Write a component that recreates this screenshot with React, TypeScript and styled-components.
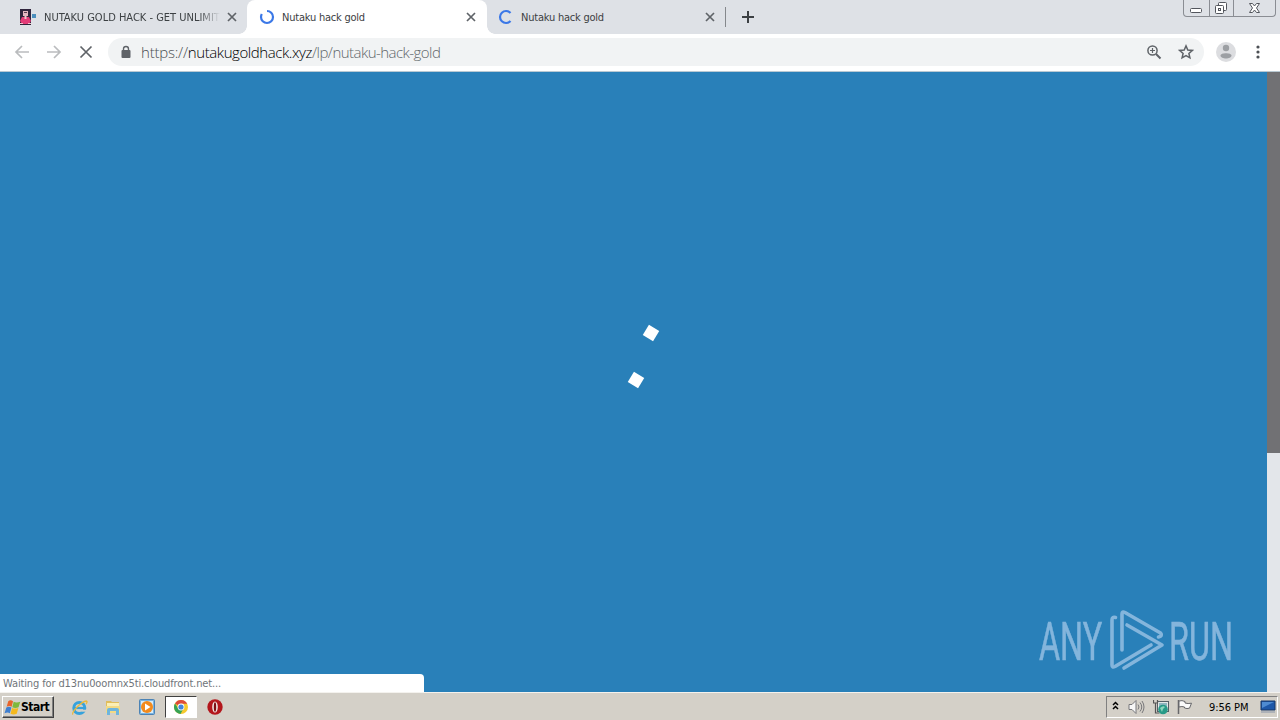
import React from 'react';
import styled, { createGlobalStyle, css } from 'styled-components';

const GlobalStyle = createGlobalStyle`
  * {
    box-sizing: border-box;
  }
  body {
    margin: 0;
    overflow: hidden;
    font-family: 'DejaVu Sans Condensed', 'DejaVu Sans', sans-serif;
    font-stretch: condensed;
  }
  svg {
    display: block;
    flex: none;
  }
`;

const Screen = styled.div`
  position: relative;
  display: flex;
  flex-direction: column;
  width: 1280px;
  height: 720px;
  background: #2980b9;
`;

const TabStrip = styled.div`
  display: flex;
  height: 34px;
  background: #dee1e6;
`;

const Tab = styled.div<{ width: number; active?: boolean }>`
  position: relative;
  display: flex;
  align-items: center;
  width: ${(props) => props.width}px;
  height: 34px;
  padding: 0 11px 0 12px;
  ${(props) => props.active && css`
    background: #fff;
    border-radius: 8px 8px 0 0;
    &:before,
    &:after {
      content: '';
      position: absolute;
      bottom: 0;
      width: 8px;
      height: 8px;
    }
    &:before {
      left: -8px;
      background: radial-gradient(circle at 0 0, transparent 7.5px, #fff 8px);
    }
    &:after {
      right: -8px;
      background: radial-gradient(circle at 100% 0, transparent 7.5px, #fff 8px);
    }
  `}
`;

const FirstTab = styled(Tab)`
  padding: 0 10px 0 19px;
`;

const LastTab = styled(Tab)`
  padding: 0 10px 0 11px;
`;

const TabTitle = styled.span<{ fade?: boolean }>`
  flex: 1;
  margin-left: 7px;
  padding-top: 1px;
  overflow: hidden;
  white-space: nowrap;
  font-size: 11px;
  line-height: 16px;
  letter-spacing: -0.22px;
  color: #3c4043;
  ${(props) => props.fade && css`
    margin-right: 7px;
    letter-spacing: 0;
    mask-image: linear-gradient(90deg, #000 88%, transparent);
  `}
`;

const TabDivider = styled.i`
  width: 1px;
  height: 20px;
  margin-top: 7px;
  background: #85888c;
`;

const NewTab = styled.div`
  display: flex;
  align-items: center;
  padding-left: 15px;
`;

const WindowControls = styled.div`
  display: flex;
  width: 93px;
  height: 17px;
  margin: 0 4px 0 auto;
  border: 1px solid #8a8d93;
  border-top: 0;
  border-radius: 0 0 4px 4px;
`;

const WindowButton = styled.div<{ width: number }>`
  display: flex;
  align-items: center;
  justify-content: center;
  width: ${(props) => props.width}px;
  & + & {
    border-left: 1px solid #8a8d93;
  }
`;

const Toolbar = styled.div`
  display: flex;
  align-items: center;
  height: 38px;
  padding: 0 14px 2px;
  background: #fff;
  border-bottom: 1px solid #b9c9d3;
`;

const NavButtons = styled.div`
  display: flex;
  flex: none;
  gap: 16px;
  width: 94px;
`;

const AddressBar = styled.div`
  display: flex;
  flex: none;
  align-items: center;
  width: 1096px;
  height: 28px;
  padding: 0 10px 0 12px;
  background: #f1f3f4;
  border-radius: 14px;
`;

const Url = styled.span`
  flex: 1;
  margin-left: 9px;
  font-family: 'Open Sans', 'Noto Sans', sans-serif;
  font-weight: 300;
  font-stretch: normal;
  font-size: 15px;
  line-height: 20px;
  letter-spacing: -0.54px;
  white-space: nowrap;
  color: #62676b;
`;

const UrlScheme = styled.span`
  letter-spacing: -0.22px;
  color: #4a4e52;
`;

const UrlHost = styled.span`
  letter-spacing: -0.42px;
  color: #000;
`;

const AddressIcons = styled.div`
  display: flex;
  gap: 16px;
`;

const ProfileButtons = styled.div`
  display: flex;
  align-items: center;
  gap: 16px;
  margin-left: 12px;
`;

const Page = styled.main`
  display: flex;
  height: 620px;
`;

const Viewport = styled.div`
  position: relative;
  flex: 1;
  background: #2980b9;
`;

const Cube = styled.i<{ x: number; y: number }>`
  position: absolute;
  left: ${(props) => props.x}px;
  top: ${(props) => props.y}px;
  width: 12px;
  height: 12px;
  background: #fff;
  transform: rotate(31deg);
`;

const ScrollTrack = styled.div`
  width: 13px;
  background: #e3e6ea;
`;

const ScrollThumb = styled.div`
  height: 381px;
  background: #717174;
`;

const StatusBubble = styled.div`
  position: absolute;
  left: 0;
  bottom: 0;
  width: 424px;
  height: 18px;
  padding: 1px 0 0 3px;
  background: #fff;
  border-radius: 0 4px 0 0;
  font-size: 11px;
  line-height: 18px;
  letter-spacing: -0.13px;
  color: #70757a;
`;

const Watermark = styled.div`
  position: absolute;
  left: 1039px;
  top: 538px;
  display: flex;
  align-items: center;
  width: 200px;
  height: 62px;
  color: #84b5dc;
`;

const WatermarkWord = styled.div<{ width: number; scale: number }>`
  flex: none;
  width: ${(props) => props.width}px;
  padding-top: 1px;
  font: 400 53px/62px Roboto, sans-serif;
  -webkit-text-stroke: 0.6px currentColor;
  white-space: nowrap;
  span {
    display: inline-block;
    transform: scaleX(${(props) => props.scale});
    transform-origin: 0 50%;
  }
`;

const Taskbar = styled.footer`
  display: flex;
  align-items: center;
  height: 28px;
  padding: 1px 2px 0;
  background: #d4d0c8;
  border-top: 1px solid #f4f2ee;
`;

const StartButton = styled.div`
  display: flex;
  align-items: center;
  width: 52px;
  height: 22px;
  padding-left: 1px;
  border: 1px solid;
  border-color: #fff #404040 #404040 #fff;
  box-shadow: inset -1px -1px #808080;
  font-size: 12px;
  font-weight: bold;
  letter-spacing: -0.5px;
  color: #000;
`;

const QuickLaunch = styled.div`
  display: flex;
  align-items: center;
  margin-left: 8px;
`;

const Launcher = styled.div<{ pressed?: boolean }>`
  display: flex;
  align-items: center;
  justify-content: center;
  width: 34px;
  height: 22px;
  ${(props) => props.pressed && css`
    width: 32px;
    margin: 0 1px;
    background: #fff;
    border: 1px solid;
    border-color: #404040 #fff #fff #404040;
  `}
`;

const Tray = styled.div`
  display: flex;
  align-items: center;
  width: 172px;
  height: 22px;
  margin-left: auto;
  padding-left: 5px;
  border: 1px solid;
  border-color: #808080 #fff #fff #808080;
`;

const TrayIcons = styled.div`
  display: flex;
  align-items: center;
  gap: 8px;
  margin-left: 9px;
`;

const Clock = styled.span`
  width: 40px;
  margin: 0 11px 0 16px;
  white-space: nowrap;
  font-size: 11px;
  letter-spacing: -0.05px;
  color: #000;
`;

const CloseIcon = () => (
  <svg width="10" height="10" viewBox="0 0 10 10" stroke="#5f6368" strokeWidth="1.7">
    <path d="M1 1l8 8M9 1L1 9" />
  </svg>
);

const Favicon = () => (
  <svg width="18" height="16" viewBox="0 0 18 16">
    <rect x="1" width="11" height="16" fill="#30243c" />
    <path d="M4 2h5v5H4z" fill="#e5b7c2" />
    <path d="M5 3h3v1H5z" fill="#5a3f50" />
    <path d="M3 8h7l2 4-2 3H3l-2-3z" fill="#e33c78" />
    <path d="M5.500 7h2v3h-2zM1 14h3v1H1zM9 14h3v1H9z" fill="#f1c5cc" />
    <rect x="13" y="5" width="4" height="4" fill="#4b8fbd" />
  </svg>
);

const Spinner = ({ d }: { d: string }) => (
  <svg width="16" height="16" viewBox="0 0 16 16" fill="none" stroke="#3b78e7" strokeWidth="2.2">
    <path d={d} />
  </svg>
);

const NavIcon = ({ d, color }: { d: string; color: string }) => (
  <svg width="16" height="16" viewBox="0 0 16 16" fill="none" stroke={color} strokeWidth="1.7">
    <path d={d} />
  </svg>
);

const LockIcon = () => (
  <svg width="12" height="14" viewBox="0 0 12 14">
    <path d="M3.5 6V4a2.5 2.5 0 0 1 5 0v2" fill="none" stroke="#5f6368" strokeWidth="1.4" />
    <rect x="1.5" y="5" width="9" height="8" rx="1" fill="#5f6368" />
  </svg>
);

const ZoomIcon = () => (
  <svg width="16" height="16" viewBox="0 0 16 16" fill="none" stroke="#5f6368">
    <circle cx="6.5" cy="6.5" r="4.6" strokeWidth="1.5" />
    <path d="M10 10l4.5 4.5" strokeWidth="2" />
    <path d="M4 6.5h5M6.5 4v5" strokeWidth="1.2" />
  </svg>
);

const StarIcon = () => (
  <svg width="16" height="16" viewBox="0 0 16 16" fill="none" stroke="#5f6368" strokeWidth="1.5">
    <path d="M8 1.9l1.8 4.1 4.5.4-3.4 3 1 4.4L8 11.5l-3.9 2.3 1-4.4-3.4-3 4.5-.4z" />
  </svg>
);

const AvatarIcon = () => (
  <svg width="20" height="20" viewBox="0 0 20 20">
    <circle cx="10" cy="10" r="10" fill="#dcdde0" />
    <circle cx="10" cy="6" r="3.2" fill="#9c9fa3" />
    <path d="M4.5 13.5c0-3 11-3 11 0 0 4-11 4-11 0z" fill="#9c9fa3" />
  </svg>
);

const MenuIcon = () => (
  <svg width="12" height="16" viewBox="0 0 12 16" fill="#4c5055">
    <circle cx="6" cy="3" r="1.6" />
    <circle cx="6" cy="8" r="1.6" />
    <circle cx="6" cy="13" r="1.6" />
  </svg>
);

const WatermarkLogo = () => (
  <svg width="60" height="64" viewBox="0 0 60 64" fill="none" stroke="currentColor" strokeWidth="3.6" strokeLinejoin="round" strokeLinecap="round">
    <path d="M6.500 8.500Q3 7.500 3 11v45q0 3 3 1.500L42 36" />
    <path d="M13 41V5q0-3 3-1.500L51.500 24q2.500 3-2 4" />
    <path d="M18 16l35 20L15 59" />
  </svg>
);

const WindowsFlag = () => (
  <svg width="17" height="17" viewBox="0 0 16 16">
    <path d="M4 2q2-1.500 4.500 0L7.200 7.300Q5 6 2.500 7.300z" fill="#e8642b" />
    <path d="M9.100 2.500q2.500 1.500 6.200 0L13.700 7.800q-3 1.300-5.900 0z" fill="#7fb83c" />
    <path d="M2.200 7.900q2.500-1.300 4.800 0L5.500 13.500Q3.500 12 .5 13.500z" fill="#3f7fd0" />
    <path d="M7.600 8.400q2.500 1.300 5.900 0L12 13.900q-3 1.300-5.900 0z" fill="#f5b91d" />
  </svg>
);

const ExplorerIcon = () => (
  <svg width="17" height="17" viewBox="0 0 17 17" fill="none">
    <circle cx="8.300" cy="9" r="5.500" stroke="#36a2dc" strokeWidth="3" />
    <path d="M4 9h10" stroke="#36a2dc" strokeWidth="2.200" />
    <path d="M10.500 10.700h5v2h-5z" fill="#d4d0c8" />
    <path d="M2 15.500c-2-2 8-13 13.500-13.500 1 .3.500 2-.5 3" stroke="#e9b93a" strokeWidth="1.300" />
  </svg>
);

const FolderIcon = () => (
  <svg width="16" height="16" viewBox="0 0 16 16">
    <path d="M1 2h5l1 1h7v11H1z" fill="#e0bd5c" />
    <path d="M2 4h12v4H2z" fill="#fbefb5" />
    <path d="M1 7h14v7H1z" fill="#f2da85" />
    <path d="M2 16v-5q0-2 2-2h8q2 0 2 2v5h-3v-4H5v4z" fill="#6eb5dd" />
  </svg>
);

const PlayerIcon = () => (
  <svg width="16" height="16" viewBox="0 0 16 16">
    <rect x=".5" y=".5" width="15" height="15" rx="1" fill="#79b4e2" stroke="#4c83b5" />
    <rect x="2" y="2" width="12" height="12" fill="#d8ecf8" />
    <circle cx="8" cy="8" r="6" fill="#f28a1c" />
    <path d="M6 4.500L11.500 8 6 11.500z" fill="#fff" />
  </svg>
);

const ChromeIcon = () => (
  <svg width="14" height="14" viewBox="0 0 14 14">
    <circle cx="7" cy="7" r="7" fill="#f6c92e" />
    <path d="M7 7L1 3.400A7 7 0 0 1 13.200 3.800H7z" fill="#de4b3a" />
    <path d="M1 3.400A7 7 0 0 0 6.500 14L9.500 8.500 7 7 4.200 8.500z" fill="#36a355" />
    <circle cx="7" cy="7" r="3.400" fill="#fff" />
    <circle cx="7" cy="7" r="2.600" fill="#4285dc" />
  </svg>
);

const OperaIcon = () => (
  <svg width="16" height="16" viewBox="0 0 16 16">
    <circle cx="8" cy="8" r="7.700" fill="#b3161c" />
    <path d="M3 3a7.500 7.500 0 0 1 10 0Q8-1 3 3z" fill="#e58a82" />
    <ellipse cx="8" cy="8" rx="2.800" ry="5.500" fill="#f2e9e6" />
    <ellipse cx="8" cy="8" rx="1.200" ry="4.800" fill="#7d0e13" />
  </svg>
);

const ChevronsIcon = () => (
  <svg width="7" height="12" viewBox="0 0 7 12" fill="none" stroke="#000" strokeWidth="1.500">
    <path d="M1 4l2.500-2.500L6 4M1 8L3.500 5.500 6 8" />
  </svg>
);

const SpeakerIcon = () => (
  <svg width="17" height="16" viewBox="0 0 17 16" fill="none" stroke="#77777a">
    <path d="M1 5.500h3L8 1.500v13l-4-4H1z" fill="#f7f7f7" />
    <path d="M10 5.500q2 2.500 0 5M12 3.500q3.500 4.500 0 9M14 2q4 6 0 12" />
  </svg>
);

const NetworkIcon = () => (
  <svg width="16" height="16" viewBox="0 0 16 16">
    <rect x="4.500" y="2.500" width="11" height="10" fill="#e3e6e6" stroke="#566066" />
    <rect x="6" y="4" width="8" height="7" fill="#8fb6bf" />
    <path d="M.5 1v3h4V1M2.500 4v10h4" fill="none" stroke="#555" strokeWidth="1.200" />
    <circle cx="10" cy="10.500" r="4.800" fill="#279a87" />
    <path d="M7 9q3-3 5-1l-2 2-1 3z" fill="#8dd5bd" />
  </svg>
);

const FlagIcon = () => (
  <svg width="16" height="16" viewBox="0 0 16 16" stroke="#67676a">
    <path d="M1.500 15V1" strokeWidth="1.500" />
    <path d="M2 2q3-1 6 .5v1.500q3 1 6.500.2l-2 5q-2.500.8-5-.2V8Q5 7 2 8z" fill="#fafafa" />
  </svg>
);

const DesktopIcon = () => (
  <svg width="16" height="14" viewBox="0 0 16 14">
    <path d="M1 1h14v9H1z" fill="#1d57a8" stroke="#173767" />
    <path d="M2 2h12L2 8z" fill="#4e8bd2" />
    <path d="M1 11.500h14v1H1z" fill="#8895a8" />
  </svg>
);

const App = () => (
  <>
    <GlobalStyle />
    <Screen>
      <TabStrip>
        <FirstTab width={247}>
          <Favicon />
          <TabTitle fade>NUTAKU GOLD HACK - GET UNLIMIT</TabTitle>
          <CloseIcon />
        </FirstTab>
        <Tab width={240} active>
          <Spinner d="M8 2a6 6 0 1 1-6 6q0-1.500.8-3" />
          <TabTitle>Nutaku hack gold</TabTitle>
          <CloseIcon />
        </Tab>
        <LastTab width={238}>
          <Spinner d="M12.500 4a6 6 0 1 0 0 8" />
          <TabTitle>Nutaku hack gold</TabTitle>
          <CloseIcon />
        </LastTab>
        <TabDivider />
        <NewTab>
          <svg width="14" height="14" viewBox="0 0 14 14" stroke="#3c4043" strokeWidth="2">
            <path d="M7 1v12M1 7h12" />
          </svg>
        </NewTab>
        <WindowControls>
          <WindowButton width={25}>
            <svg width="13" height="16" viewBox="0 0 13 16">
              <rect x=".5" y="8.500" width="11" height="4" rx="1" fill="#fff" stroke="#53565d" />
            </svg>
          </WindowButton>
          <WindowButton width={25}>
            <svg width="15" height="16" viewBox="0 0 15 16" fill="#fff" stroke="#53565d">
              <rect x="4.500" y="2.500" width="8" height="8" rx="1" />
              <rect x="1.500" y="5.500" width="8" height="8" rx="1" />
              <rect x="4.500" y="8.500" width="2" height="2" />
            </svg>
          </WindowButton>
          <WindowButton width={42}>
            <svg width="13" height="16" viewBox="0 0 13 16" fill="#fff" stroke="#53565d">
              <path d="M1.500 3.500h3l2 2.500 2-2.500h3L8.500 8l3 4.500h-3L6.500 10l-2 2.500h-3l3-4.500z" />
            </svg>
          </WindowButton>
        </WindowControls>
      </TabStrip>

      <Toolbar>
        <NavButtons>
          <NavIcon d="M15 8H2M8 2L2 8l6 6" color="#babcbe" />
          <NavIcon d="M1 8h13M8 2l6 6-6 6" color="#babcbe" />
          <NavIcon d="M2.500 2.500l11 11M13.500 2.500l-11 11" color="#5f6368" />
        </NavButtons>
        <AddressBar>
          <LockIcon />
          <Url>
            <UrlScheme>https://</UrlScheme>
            <UrlHost>nutakugoldhack.xyz</UrlHost>
            /lp/nutaku-hack-gold
          </Url>
          <AddressIcons>
            <ZoomIcon />
            <StarIcon />
          </AddressIcons>
        </AddressBar>
        <ProfileButtons>
          <AvatarIcon />
          <MenuIcon />
        </ProfileButtons>
      </Toolbar>

      <Page>
        <Viewport>
          <Cube x={645} y={255} />
          <Cube x={630} y={302} />
          <Watermark>
            <WatermarkWord width={70} scale={0.61}><span>ANY</span></WatermarkWord>
            <WatermarkLogo />
            <WatermarkWord width={66} scale={0.61}><span>RUN</span></WatermarkWord>
          </Watermark>
          <StatusBubble>Waiting for d13nu0oomnx5ti.cloudfront.net...</StatusBubble>
        </Viewport>
        <ScrollTrack>
          <ScrollThumb />
        </ScrollTrack>
      </Page>

      <Taskbar>
        <StartButton>
          <WindowsFlag />
          Start
        </StartButton>
        <QuickLaunch>
          <Launcher><ExplorerIcon /></Launcher>
          <Launcher><FolderIcon /></Launcher>
          <Launcher><PlayerIcon /></Launcher>
          <Launcher pressed><ChromeIcon /></Launcher>
          <Launcher><OperaIcon /></Launcher>
        </QuickLaunch>
        <Tray>
          <ChevronsIcon />
          <TrayIcons>
            <SpeakerIcon />
            <NetworkIcon />
            <FlagIcon />
          </TrayIcons>
          <Clock>9:56 PM</Clock>
          <DesktopIcon />
        </Tray>
      </Taskbar>
    </Screen>
  </>
);

export default App;
